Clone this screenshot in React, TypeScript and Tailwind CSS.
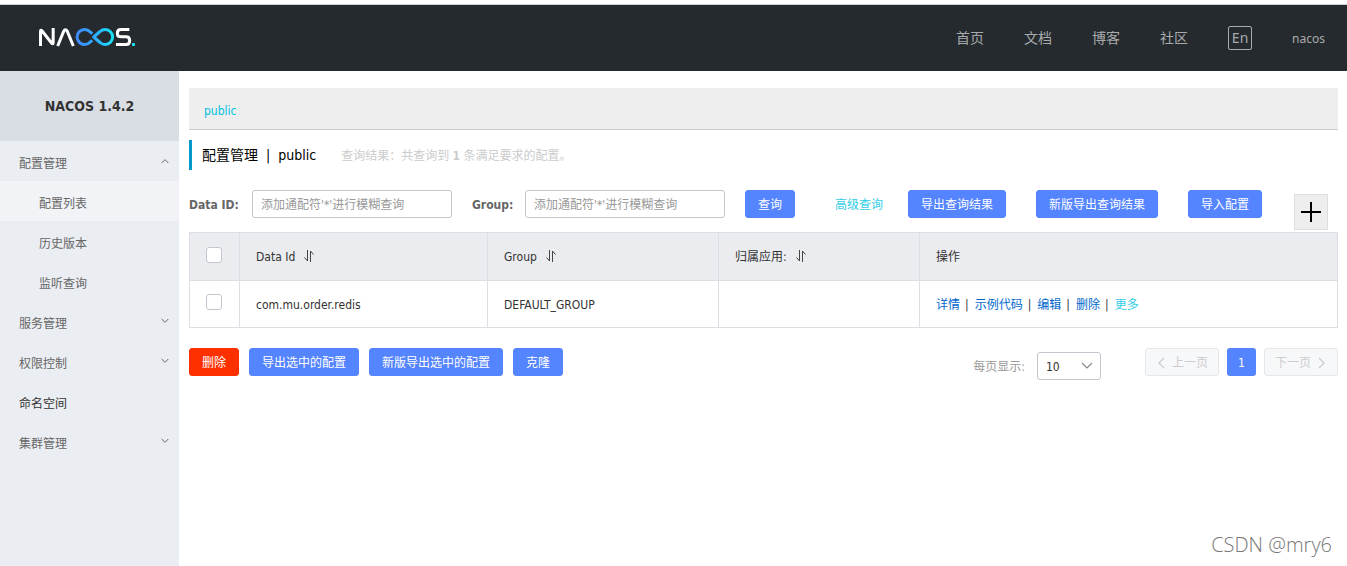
import { useState } from "react";

const navLinks = ["首页", "文档", "博客", "社区"];

type MenuItem = {
  title: string;
  open?: boolean;
  plain?: boolean;
  children?: string[];
};

const menu: MenuItem[] = [
  { title: "配置管理", open: true, children: ["配置列表", "历史版本", "监听查询"] },
  { title: "服务管理" },
  { title: "权限控制" },
  { title: "命名空间", plain: true },
  { title: "集群管理" },
];

const Logo = () => (
  <svg width="98" height="20" viewBox="0 0 294 60" fill="none" strokeWidth="9" aria-label="NACOS">
    <defs>
      <linearGradient id="loop" gradientUnits="userSpaceOnUse" x1="108" y1="0" x2="228" y2="0">
        <stop offset="0" stopColor="#4385ff" />
        <stop offset="0.5" stopColor="#2fa8ff" />
        <stop offset="1" stopColor="#17e6f4" />
      </linearGradient>
    </defs>
    {/* N A */}
    <path d="M7.500 54V10q0-6 5-1l28 36q5 5 5-1V0" stroke="#fff" />
    <path d="M59 54L77 10q5-10 11 0l18 44" stroke="#fff" />
    {/* infinity loop */}
    <path d="M163 17L156 11.500A22.500 22.500 0 1 0 156 42.500L163 37" stroke="url(#loop)" />
    <path d="M167 27L186 10.500A22.500 22.500 0 1 1 186 43.500Z" stroke="url(#loop)" strokeLinejoin="round" />
    {/* S */}
    <path d="M274 4.500H249q-11 0-11 11t11 11h15q11 0 11 11.500t-11 11.500H234" stroke="#fff" />
    <rect x="282" y="45" width="9" height="9" rx="2" fill="#17e6f4" />
  </svg>
);

const Chevron = ({ dir, size = 8 }: { dir: "up" | "down" | "left" | "right"; size?: number }) => {
  const d = {
    up: "M1 9L6 4L11 9",
    down: "M1 3L6 8L11 3",
    left: "M8 1L3 6L8 11",
    right: "M4 1L9 6L4 11",
  }[dir];
  return (
    <svg className="overflow-visible" width={size} height={size} viewBox="0 0 12 12" fill="none" stroke="currentColor" strokeWidth={size > 8 ? 1.2 : 1.5}>
      <path d={d} />
    </svg>
  );
};

const SortIcon = () => (
  <svg className="mb-[2px]" width="12" height="14" viewBox="0 0 12 14" fill="none" stroke="#444" strokeWidth="1">
    <path d="M4.500 1V12L1.500 8.500M7.500 13V2L10.500 5.500" />
  </svg>
);

const Button = ({ children, danger }: { children: string; danger?: boolean }) => (
  <button
    className={
      "h-7 px-3 pt-px border rounded-[3px] text-xs text-white whitespace-nowrap cursor-pointer " +
      (danger ? "bg-[#ff3000] border-[#ff3000]" : "bg-[#5584ff] border-[#5584ff]")
    }
  >
    {children}
  </button>
);

const Checkbox = ({ label }: { label: string }) => (
  <input
    type="checkbox"
    aria-label={label}
    className="block ml-4 mb-1 appearance-none size-4 rounded-[3px] border border-[#c4c6cf] bg-white checked:bg-[#5584ff]"
  />
);

const Header = () => (
  <header className="mt-1 border-t border-[#d0d0d0]">
    <div className="h-[66px] bg-[#252a2f] flex items-center justify-between pl-[38px] pr-[22px]">
      <a href="#home">
        <Logo />
      </a>
      <nav className="flex items-center gap-10 text-sm text-[#a8aaac] font-['Noto_Sans','Noto_Sans_CJK_SC',sans-serif]">
        {navLinks.map((name) => (
          <a key={name} href="#nav">
            {name}
          </a>
        ))}
        <button className="w-6 h-6 border border-[#a8aaac] rounded-[2px] leading-5 cursor-pointer">En</button>
        <a href="#user" className="pt-[2px] text-xs">
          nacos
        </a>
      </nav>
    </div>
  </header>
);

const Sidebar = () => (
  <aside className="w-[179px] shrink-0 bg-[#eaedf1] text-xs text-[#666]">
    <h1 className="h-[70px] bg-[#d9dde4] flex items-center justify-center text-sm font-bold text-[#333]">
      NACOS 1.4.2
    </h1>
    <ul>
      {menu.map((item) => (
        <li key={item.title}>
          <a
            href="#menu"
            className={"h-10 pl-[19px] pr-[10px] flex items-center justify-between " + (item.plain ? "text-[#333]" : "")}
          >
            <span className="pt-[6px]">{item.title}</span>
            {!item.plain && <Chevron dir={item.open ? "up" : "down"} />}
          </a>
          {item.children && (
            <ul>
              {item.children.map((child, i) => (
                <li key={child}>
                  <a href="#menu" className={"h-10 pl-[39px] pt-[6px] flex items-center " + (i === 0 ? "bg-[#f1f3f7]" : "")}>
                    {child}
                  </a>
                </li>
              ))}
            </ul>
          )}
        </li>
      ))}
    </ul>
  </aside>
);

const SearchBar = () => {
  const [dataId, setDataId] = useState("");
  const [group, setGroup] = useState("");
  const field =
    "w-[200px] h-7 px-2 pt-[2px] border border-[#c4c6cf] rounded-[3px] text-[#333] placeholder:text-[#999] outline-none";

  return (
    <form className="mt-5 flex items-start justify-between text-xs">
      <div className="flex items-center">
        <label htmlFor="dataId" className="w-[63px] pt-[2px] font-bold text-[#666]">
          Data ID:
        </label>
        <input id="dataId" className={field} value={dataId} onChange={(e) => setDataId(e.target.value)} placeholder="添加通配符'*'进行模糊查询" />
        <label htmlFor="group" className="w-[53px] ml-5 pt-[2px] font-bold text-[#666]">
          Group:
        </label>
        <input id="group" className={field} value={group} onChange={(e) => setGroup(e.target.value)} placeholder="添加通配符'*'进行模糊查询" />
        <div className="ml-5 mr-10">
          <Button>查询</Button>
        </div>
        <a href="#advanced" className="mr-[25px] pt-[2px] text-[#33cde5]">
          高级查询
        </a>
        <div className="flex gap-[30px]">
          <Button>导出查询结果</Button>
          <Button>新版导出查询结果</Button>
          <Button>导入配置</Button>
        </div>
      </div>
      <button type="button" aria-label="新建配置" className="mt-1 mr-[10px] w-[34px] h-9 bg-[#eee] border border-[#ddd] flex items-center justify-center cursor-pointer">
        <svg className="mb-px" width="20" height="20" viewBox="0 0 20 20" stroke="#000" strokeWidth="2">
          <path d="M0 10H20M10 0V20" />
        </svg>
      </button>
    </form>
  );
};

const ConfigTable = () => {
  const cell = "border border-[#dcdee3] px-4 font-normal text-left";
  const actions = ["详情", "示例代码", "编辑", "删除"];

  return (
    <table className="mt-[2px] w-full table-fixed border-collapse text-xs text-[#333]">
      <thead className="bg-[#ebecf0]">
        <tr className="h-12">
          <th className="w-[50px] border border-[#dcdee3]">
            <Checkbox label="全选" />
          </th>
          <th className={cell + " w-[248px]"}>
            <span className="flex items-center gap-2">
              Data Id <SortIcon />
            </span>
          </th>
          <th className={cell + " w-[231px]"}>
            <span className="flex items-center gap-2">
              Group <SortIcon />
            </span>
          </th>
          <th className={cell + " w-[201px]"}>
            <span className="flex items-center gap-2">
              归属应用: <SortIcon />
            </span>
          </th>
          <th className={cell}>操作</th>
        </tr>
      </thead>
      <tbody>
        <tr className="h-[47px]">
          <td className="border border-[#dcdee3]">
            <Checkbox label="com.mu.order.redis" />
          </td>
          <td className={cell + " pt-[2px]"}>com.mu.order.redis</td>
          <td className={cell + " pt-[2px]"}>DEFAULT_GROUP</td>
          <td className={cell}></td>
          <td className={cell + " pt-[2px]"}>
            {actions.map((name) => (
              <span key={name}>
                <a href="#action" className="text-[#06c]">
                  {name}
                </a>
                <span className="ml-[5px] mr-[6px]">|</span>
              </span>
            ))}
            <a href="#more" className="text-[#33cde5]">
              更多
            </a>
          </td>
        </tr>
      </tbody>
    </table>
  );
};

const Footer = () => (
  <div className="mt-5 flex items-start justify-between text-xs">
    <div className="flex gap-[10px]">
      <Button danger>删除</Button>
      <Button>导出选中的配置</Button>
      <Button>新版导出选中的配置</Button>
      <Button>克隆</Button>
    </div>
    <div className="flex items-start">
      <div className="mt-1 mr-11 flex items-center">
        <label htmlFor="pageSize" className="mr-3 pt-[2px] text-[#999]">
          每页显示:
        </label>
        <div className="relative">
          <select id="pageSize" className="w-16 h-7 pl-2 pt-[2px] appearance-none bg-white border border-[#c4c6cf] rounded-[3px] text-[#333]">
            <option>10</option>
            <option>20</option>
            <option>30</option>
          </select>
          <span className="absolute right-2 top-2 text-[#888] pointer-events-none">
            <Chevron dir="down" size={12} />
          </span>
        </div>
      </div>
      <div className="flex gap-2">
        <button disabled className="w-[74px] h-7 pt-px flex items-center justify-center gap-1 border border-[#e6e7eb] rounded-[3px] bg-[#f7f8fa] text-[#ccc]">
          <Chevron dir="left" size={12} />
          上一页
        </button>
        <button className="w-[29px] h-7 pt-px rounded-[3px] bg-[#5584ff] text-white">1</button>
        <button disabled className="w-[74px] h-7 pt-px flex items-center justify-center gap-1 border border-[#e6e7eb] rounded-[3px] bg-[#f7f8fa] text-[#ccc]">
          下一页
          <Chevron dir="right" size={12} />
        </button>
      </div>
    </div>
  </div>
);

export default function App() {
  return (
    <div className="relative min-h-screen flex flex-col bg-white font-['DejaVu_Sans_Condensed','Noto_Sans_CJK_SC',sans-serif]">
      <Header />
      <div className="flex flex-1">
        <Sidebar />
        <main className="flex-1 min-w-0 pt-[17px] pl-[10px] pr-[9px]">
          <div className="h-[42px] px-[15px] pt-1 flex items-center bg-[#eee] border-b border-[#ccc] text-xs">
            <a href="#public" className="text-[#00c1de]">
              public
            </a>
          </div>
          <div className="mt-[10px] h-[30px] pl-[10px] flex items-center border-l-3 border-[#09c]">
            <h2 className="flex gap-2 text-sm text-black">
              <span>配置管理</span>
              <span>|</span>
              <span>public</span>
            </h2>
            <p className="ml-[25px] pt-[2px] text-xs text-[#ccc]">
              查询结果：共查询到 <strong>1</strong> 条满足要求的配置。
            </p>
          </div>
          <SearchBar />
          <ConfigTable />
          <Footer />
        </main>
      </div>
      <div className="absolute right-[15px] bottom-[7px] text-xl leading-7 font-light text-[#777] font-['Open_Sans',sans-serif]">CSDN @mry6</div>
    </div>
  );
}
